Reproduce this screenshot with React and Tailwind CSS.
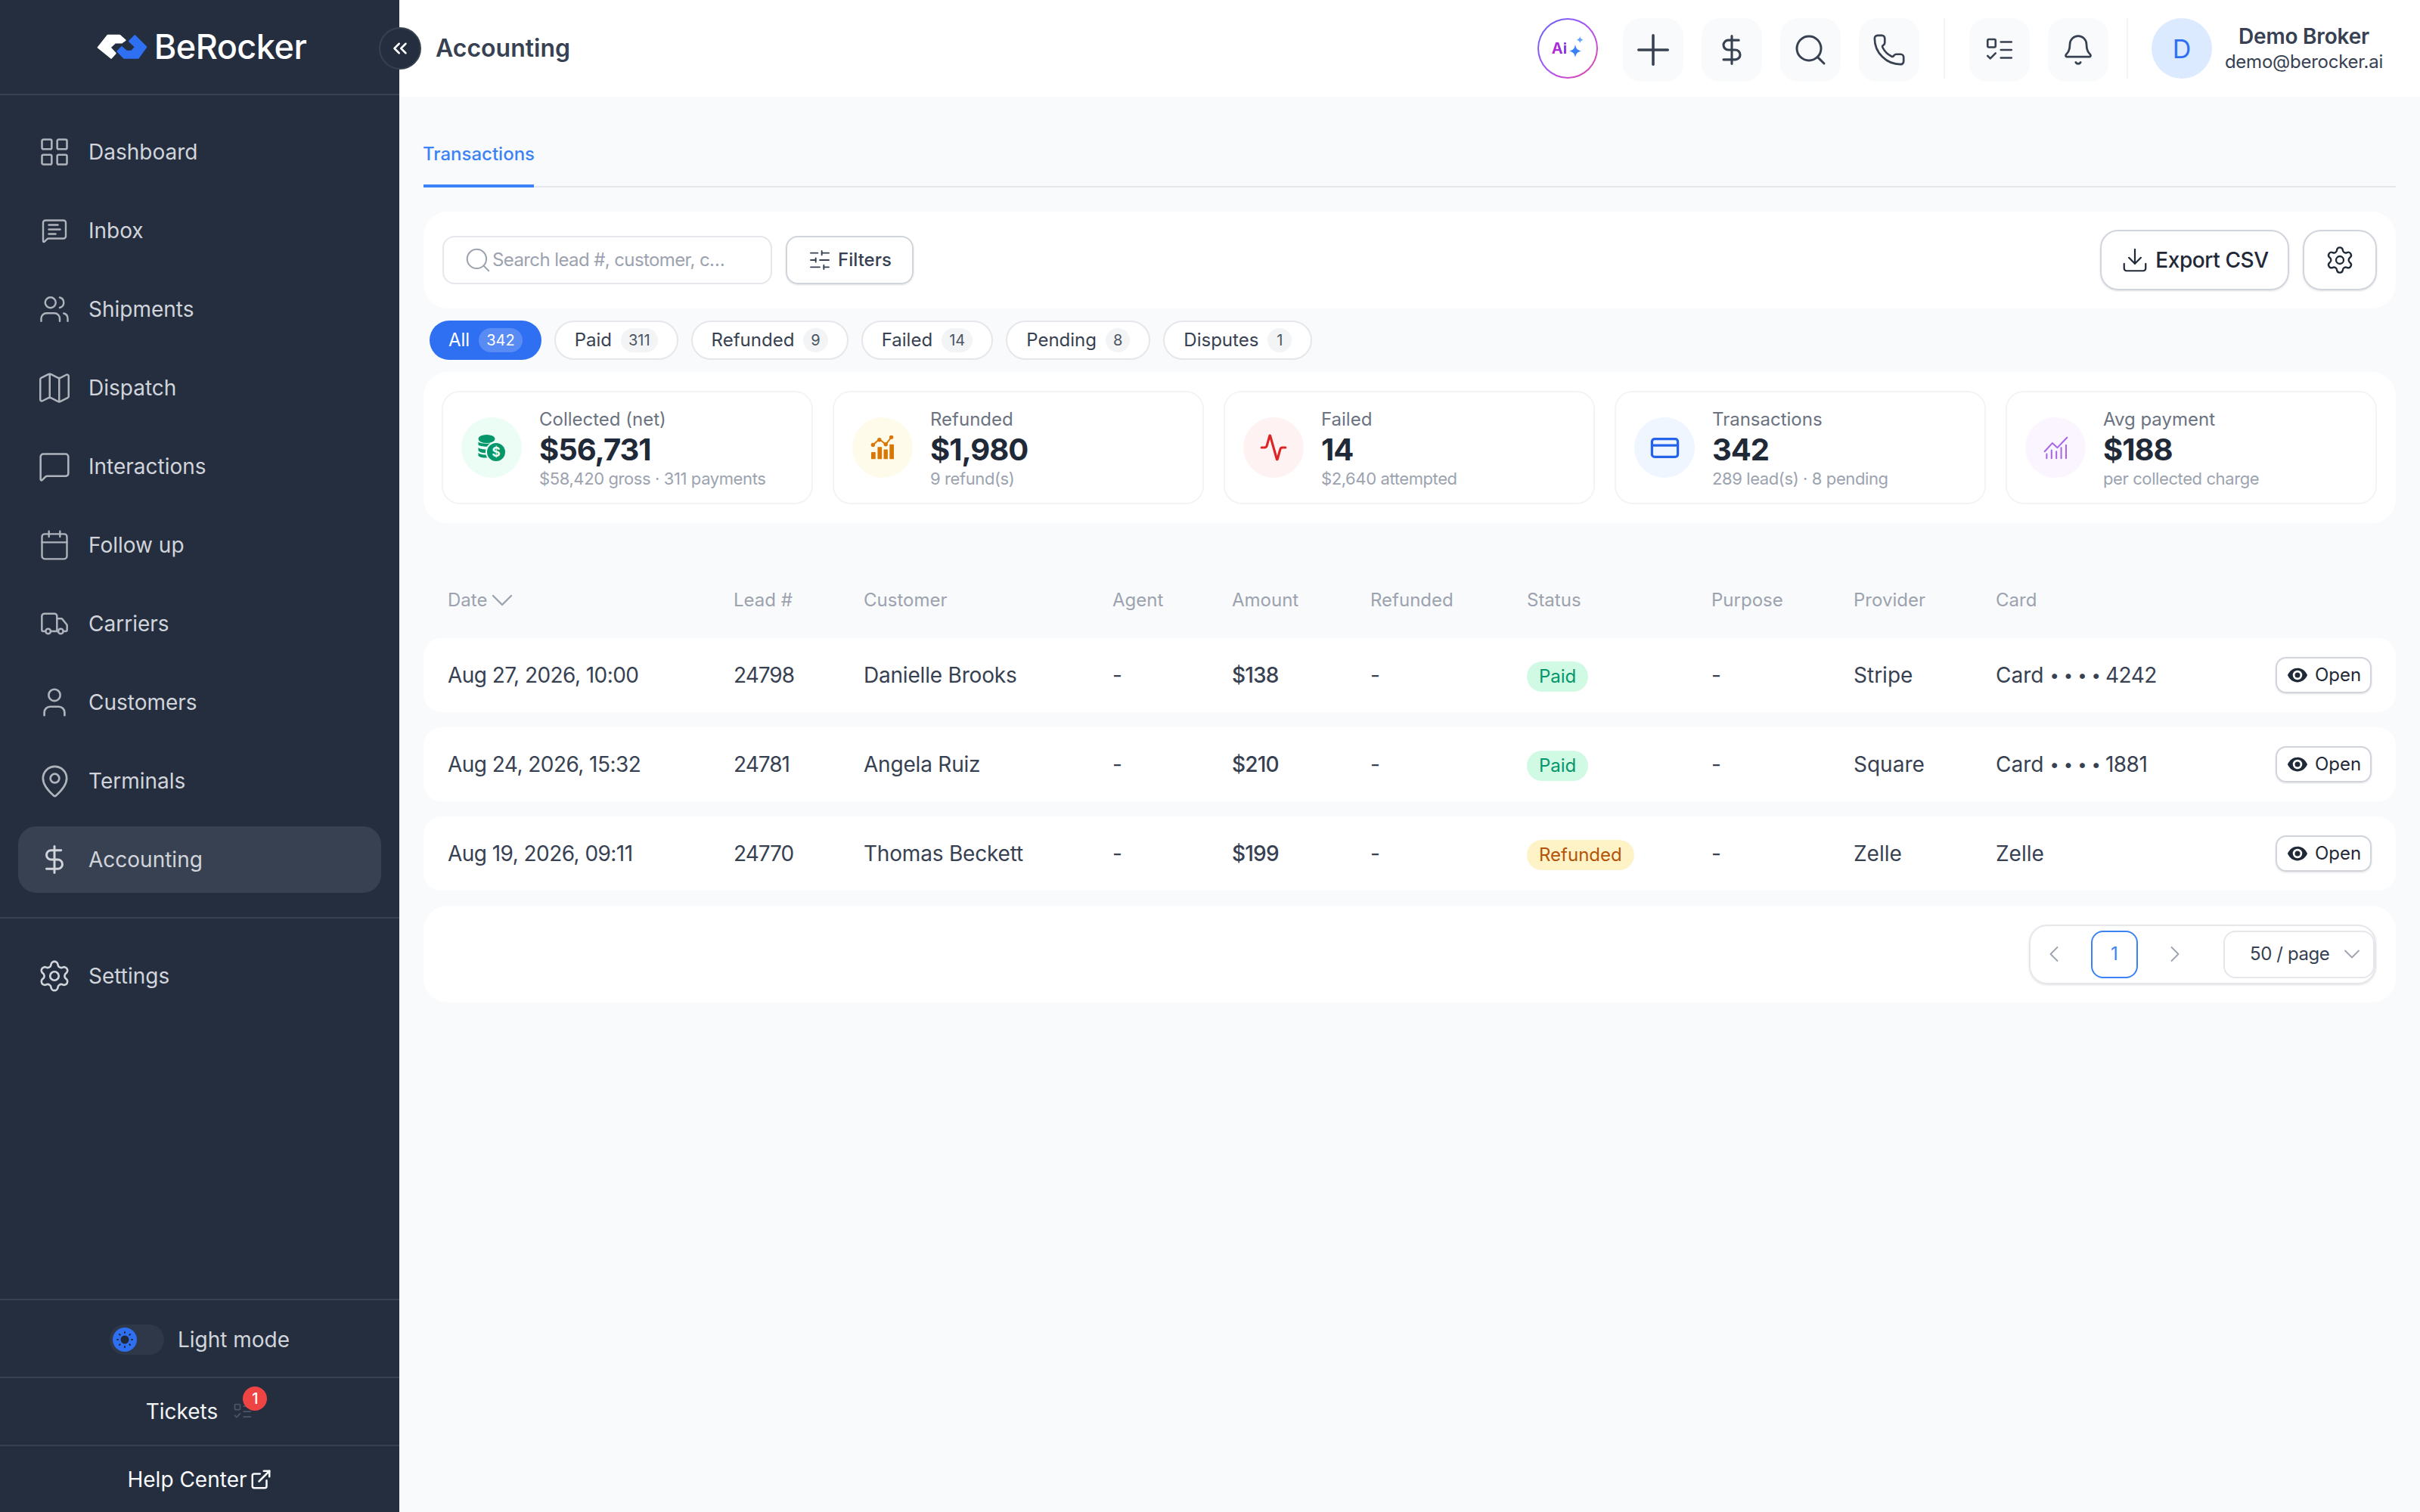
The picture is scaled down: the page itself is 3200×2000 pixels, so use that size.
import {
  Activity,
  Bell,
  Calendar,
  ChevronDown,
  ChevronLeft,
  ChevronRight,
  ChevronsLeft,
  CreditCard,
  DollarSign,
  Download,
  ExternalLink,
  LayoutGrid,
  Map,
  MapPin,
  MessageSquare,
  MessageSquareText,
  Phone,
  Plus,
  Search,
  Settings,
  SlidersHorizontal,
  Truck,
  User,
  Users,
} from 'lucide-react';

const font = { fontFamily: 'Inter, "Noto Sans", sans-serif' };

const navItems = [
  { label: 'Dashboard', icon: LayoutGrid, size: 44, sw: 1.4 },
  { label: 'Inbox', icon: MessageSquareText, size: 36, sw: 1.6 },
  { label: 'Shipments', icon: Users, size: 42, sw: 1.4 },
  { label: 'Dispatch', icon: Map, size: 50, sw: 1.2 },
  { label: 'Interactions', icon: MessageSquare, size: 44, sw: 1.4 },
  { label: 'Follow up', icon: Calendar, size: 44, sw: 1.3 },
  { label: 'Carriers', icon: Truck, size: 40, sw: 1.5 },
  { label: 'Customers', icon: User, size: 46, sw: 1.4 },
  { label: 'Terminals', icon: MapPin, size: 47, sw: 1.4 },
  { label: 'Accounting', icon: DollarSign, size: 42, sw: 1.7, active: true },
];

const pills = [
  { label: 'All', count: 342, active: true },
  { label: 'Paid', count: 311 },
  { label: 'Refunded', count: 9 },
  { label: 'Failed', count: 14 },
  { label: 'Pending', count: 8 },
  { label: 'Disputes', count: 1 },
];

const columns = ['Lead #', 'Customer', 'Agent', 'Amount', 'Refunded', 'Status', 'Purpose', 'Provider', 'Card'];

const rows = [
  { date: 'Aug 27, 2026, 10:00', lead: '24798', customer: 'Danielle Brooks', amount: '$138', status: 'Paid', provider: 'Stripe', card: 'Card', last4: '4242' },
  { date: 'Aug 24, 2026, 15:32', lead: '24781', customer: 'Angela Ruiz', amount: '$210', status: 'Paid', provider: 'Square', card: 'Card', last4: '1881' },
  { date: 'Aug 19, 2026, 09:11', lead: '24770', customer: 'Thomas Beckett', amount: '$199', status: 'Refunded', provider: 'Zelle', card: 'Zelle' },
];

function Logo() {
  return (
    <svg width="69" height="36" viewBox="20 42 207 105">
      <path d="M28 97 L66 49 L114 49 L136 68 L122 78 L96 78 L76 97 L97 120 L80 139 Z" fill="#fff" stroke="#fff" strokeWidth="6" strokeLinejoin="round" />
      <path d="M174 50 L219 95 L187 139 L131 139 L105 112 L122 95 L141 112 L160 112 L176 95 L152 72 Z" fill="#2f6ff2" stroke="#2f6ff2" strokeWidth="6" strokeLinejoin="round" />
    </svg>
  );
}

function ChecklistIcon({ className, size = 40 }) {
  return (
    <svg className={className} width={size} height={size} viewBox="0 0 24 24" fill="none" stroke="currentColor" strokeWidth="1.5" strokeLinecap="round" strokeLinejoin="round">
      <rect x="3" y="4" width="6" height="6" rx="1" />
      <path d="M13 6h8M13 12h8M13 18h8M3 16.5l2 2 4-4" />
    </svg>
  );
}

function SunDot() {
  return (
    <svg width="24" height="24" viewBox="0 0 24 24" fill="#1f2937" stroke="#1f2937" strokeWidth="2" strokeLinecap="round">
      <circle cx="12" cy="12" r="4.5" />
      <path d="M12 2v1M12 21v1M2 12h1M21 12h1M5 5l.7.7M18.3 18.3l.7.7M5 19l.7-.7M18.3 5.700l.7-.7" />
    </svg>
  );
}

function CoinsIcon() {
  return (
    <svg width="36" height="35" viewBox="0 0 36 35" fill="#059669">
      <ellipse cx="11.5" cy="5.5" rx="11" ry="5.5" />
      <path d="M0.5 9.5c3 3 19 3 22 0v4c-3 3-19 3-22 0zM0.5 17c3 3 15 3 16 2v4c-4 2-13 2-16-2zM0.5 24c3 3 12 3 15 2l1 4c-5 1-13 1-16-2z" />
      <circle cx="24" cy="23" r="13" stroke="#ecfdf5" strokeWidth="2" />
      <text x="24" y="29" textAnchor="middle" fontSize="17" fontWeight="700" fill="#ecfdf5" fontFamily="Inter">$</text>
    </svg>
  );
}

function BarsIcon() {
  return (
    <svg width="32" height="32" viewBox="105 110 95 95" fill="#d97706">
      <path d="M115 147L140 125L165 145L187 117" fill="none" stroke="#d97706" strokeWidth="6" strokeLinejoin="round" />
      <circle cx="115" cy="147" r="8" />
      <circle cx="140" cy="127" r="8" />
      <circle cx="165" cy="145" r="8" />
      <circle cx="187" cy="117" r="8" />
      <rect x="108" y="175" width="17" height="28" rx="2" />
      <rect x="133" y="155" width="17" height="48" rx="2" />
      <rect x="157" y="165" width="16" height="38" rx="2" />
      <rect x="180" y="145" width="17" height="58" rx="2" />
    </svg>
  );
}

function ThinChartIcon() {
  return (
    <svg width="33" height="31" viewBox="95 110 98 92" fill="none" stroke="#a866e6" strokeLinecap="round" strokeLinejoin="round">
      <path d="M100 170L130 137L150 155L188 115" strokeWidth="6" />
      <path d="M108 197V180M127 197V165M146 197V170M165 197V155M184 197V145" strokeWidth="6" />
    </svg>
  );
}

function OpenEye() {
  return (
    <svg width="30" height="30" viewBox="0 0 24 24" fill="#1f2937">
      <path d="M1.500 12C4 6.800 7.600 4.500 12 4.500s8 2.300 10.500 7.500c-2.500 5.200-6.100 7.500-10.500 7.500S4 17.200 1.500 12z" />
      <circle cx="12" cy="12" r="5" fill="#fff" />
      <circle cx="12" cy="12" r="2.800" />
    </svg>
  );
}

function Sparkles() {
  return (
    <svg width="22" height="28" viewBox="2 0 14 18" fill="#3b82f6" className="-mt-1">
      <path d="M9 7c.6 3.400 1.800 4.600 5 5.500-3.200.9-4.400 2.100-5 5.500-.6-3.400-1.800-4.600-5-5.500 3.200-.9 4.400-2.100 5-5.500z" />
      <path d="M13 0c.3 1.800 1 2.500 2.800 3-1.800.5-2.500 1.200-2.800 3-.3-1.800-1-2.500-2.800-3 1.800-.5 2.500-1.200 2.800-3z" fill="#60a5fa" />
    </svg>
  );
}

function StatCard({ icon, tint, label, value, sub }) {
  return (
    <div className="flex h-[150px] flex-1 items-center gap-[23px] rounded-[24px] border-2 border-[#f3f4f6] bg-white pl-6">
      <div className={`flex h-20 w-20 shrink-0 items-center justify-center rounded-full ${tint}`}>{icon}</div>
      <div className="flex flex-col pt-[2px]">
        <span className="text-[24px] leading-[32px] text-[#6b7280]">{label}</span>
        <span className="text-[40px] leading-[48px] font-bold tracking-[-1px] text-[#1f2937]">{value}</span>
        <span className="-mt-[1px] text-[22px] leading-[30px] tracking-[-0.4px] text-[#9ca3af]">{sub}</span>
      </div>
    </div>
  );
}

function HeaderButton({ children }) {
  return <button className="mt-1 flex h-[84px] w-20 items-center justify-center rounded-[24px] bg-[#f9fafb] text-[#374151]">{children}</button>;
}

const gridCols = 'grid grid-cols-[378px_172px_329px_158px_183px_207px_244px_188px_188px_1fr] items-center pl-8 pr-8';

export default function App() {
  return (
    <div className="flex h-screen bg-[#f9fafb]" style={font}>
      <aside className="flex w-[528px] shrink-0 flex-col bg-[#242e3f]">
        <div className="flex h-[126px] items-center justify-center gap-[8px] border-b-2 border-[#374151] pl-[4px]">
          <Logo />
          <span className="text-[45px] font-medium tracking-[-0.5px] text-white">BeRocker</span>
        </div>
        <nav className="flex flex-col gap-4 border-b-2 border-[#374151] px-6 pt-[31px] pb-8">
          {navItems.map(({ label, icon: Icon, size, sw, active }) => (
            <a key={label} className={`flex h-[88px] items-center gap-[25px] rounded-[24px] pl-7 text-[28px] text-[#d1d5db] ${active ? 'bg-[#374151]' : ''}`}>
              <span className="flex h-10 w-10 shrink-0 items-center justify-center">
                <Icon size={size} strokeWidth={sw} className={`shrink-0 ${active ? 'text-[#d1d5db]' : 'text-[#aeb3bc]'}`} />
              </span>
              {label}
            </a>
          ))}
        </nav>
        <div className="px-6 pt-8">
          <a className="flex h-[88px] items-center gap-[25px] pl-7 text-[28px] text-[#d1d5db]">
            <span className="flex h-10 w-10 shrink-0 items-center justify-center">
              <Settings size={46} strokeWidth={1.4} className="shrink-0 text-[#d1d5db]" />
            </span>
            Settings
          </a>
        </div>
        <div className="mt-auto flex h-[103px] items-center justify-center gap-[18px] border-t-2 border-[#374151] pt-[3px] text-[28px] text-[#d1d5db]">
          <div className="flex h-10 w-[72px] items-center rounded-full bg-[#2e3848] pl-1">
            <div className="flex h-8 w-8 items-center justify-center rounded-full bg-[#2f6ff2]">
              <SunDot />
            </div>
          </div>
          Light mode
        </div>
        <div className="flex h-[90px] items-center justify-center gap-[19px] border-t-2 border-[#374151] text-[28px] text-[#f3f4f6]">
          Tickets
          <div className="relative">
            <ChecklistIcon size={28} className="text-[#4b5563]" />
            <span className="absolute -top-[19px] left-[14px] flex h-8 w-8 items-center justify-center rounded-full bg-[#ef4444] text-[20px] font-medium text-white">1</span>
          </div>
        </div>
        <div className="flex h-[89px] items-center justify-center gap-[3px] border-t-2 border-[#374151] text-[28px] text-[#f9fafb]">
          Help Center
          <ExternalLink size={30} strokeWidth={2} />
        </div>
      </aside>

      <div className="relative flex min-w-0 flex-1 flex-col">
        <button className="absolute top-9 -left-[27px] flex h-14 w-14 items-center justify-center rounded-full border-2 border-[#374151] bg-[#242e3f] text-white">
          <ChevronsLeft size={30} strokeWidth={2} />
        </button>
        <header className="flex h-[128px] shrink-0 items-center bg-white pr-[49px] pl-12">
          <h1 className="text-[32px] font-semibold text-[#374151]">Accounting</h1>
          <div className="ml-auto flex items-center gap-6">
            <div className="mr-[9px] flex h-20 w-20 items-center justify-center rounded-full bg-[linear-gradient(135deg,#6366f1,#a855f7,#ec4899)] p-[2px]">
              <div className="flex h-full w-full items-center justify-center rounded-full bg-white">
                <span className="bg-[linear-gradient(90deg,#c026d3,#7c3aed)] bg-clip-text text-[20px] font-bold text-transparent">Ai</span>
                <Sparkles />
              </div>
            </div>
            <HeaderButton><Plus size={66} strokeWidth={1.3} className="shrink-0" /></HeaderButton>
            <HeaderButton><DollarSign size={44} strokeWidth={1.7} /></HeaderButton>
            <HeaderButton><Search size={48} strokeWidth={1.5} /></HeaderButton>
            <HeaderButton><Phone size={46} strokeWidth={1.4} /></HeaderButton>
            <div className="mx-2 h-20 w-[2px] bg-[#f3f4f6]" />
            <HeaderButton><ChecklistIcon size={42} /></HeaderButton>
            <HeaderButton><Bell size={44} strokeWidth={1.5} /></HeaderButton>
            <div className="mr-[7px] h-20 w-[2px] bg-[#f3f4f6]" />
            <div className="flex items-center gap-[17px]">
              <div className="flex h-20 w-20 items-center justify-center rounded-full bg-[#dbeafe] text-[34px] text-[#2f6ff2]">D</div>
              <div className="flex flex-col items-center">
                <span className="text-[28px] leading-[36px] font-semibold tracking-[-0.2px] text-[#374151]">Demo Broker</span>
                <span className="text-[24px] leading-[32px] tracking-[-0.25px] text-[#374151]">demo@berocker.ai</span>
              </div>
            </div>
          </div>
        </header>

        <main className="flex flex-col pr-8 pl-8">
          <div className="mt-4 flex h-[104px] border-b-2 border-[#e5e7eb]">
            <div className="flex h-[104px] w-[146px] items-center justify-center border-b-4 border-[#3b82f6] pt-5 text-[24px] font-medium text-[#3b82f6]">Transactions</div>
          </div>

          <section className="mt-8 flex h-32 items-center gap-[18px] rounded-[32px] bg-white pr-[25px] pl-[25px]">
            <label className="flex h-16 w-[436px] items-center rounded-[16px] border-2 border-[#e5e7eb] pl-[26px]">
              <Search size={38} strokeWidth={1.3} className="shrink-0 text-[#9ca3af]" />
              <input placeholder="Search lead #, customer, c…" className="min-w-0 flex-1 text-[24px] tracking-[-0.6px] outline-none placeholder:text-[#9ca3af]" />
            </label>
            <button className="flex h-16 w-[169px] items-center justify-center gap-2 rounded-[16px] border-2 border-[#d1d5db] text-[24px] font-medium text-[#374151] shadow-sm">
              <SlidersHorizontal size={32} strokeWidth={1.4} />
              Filters
            </button>
            <button className="ml-auto flex h-20 w-[250px] items-center justify-center gap-2 rounded-[24px] border-2 border-[#d1d5db] text-[28px] font-medium tracking-[-0.4px] text-[#1f2937] shadow-sm">
              <Download size={38} strokeWidth={1.4} />
              Export CSV
            </button>
            <button className="flex h-20 w-[98px] items-center justify-center rounded-[24px] border-2 border-[#d1d5db] text-[#1f2937] shadow-sm">
              <Settings size={40} strokeWidth={1.4} />
            </button>
          </section>

          <div className="mt-4 flex h-[52px] gap-[17px] pl-2">
            {pills.map((p) => (
              <button
                key={p.label}
                className={`flex items-center gap-3 rounded-full px-[25px] text-[24px] ${p.active ? 'bg-[#2f6ff2] text-white' : 'border-2 border-[#e5e7eb] bg-white text-[#374151]'}`}
              >
                {p.label}
                <span className={`flex h-8 min-w-8 items-center justify-center rounded-full px-[10px] text-[20px] ${p.active ? 'bg-white/20 text-white' : 'bg-[#f3f4f6] text-[#4b5563]'}`}>{p.count}</span>
              </button>
            ))}
          </div>

          <section className="mt-4 flex h-[200px] items-center gap-[26px] rounded-[32px] bg-white pr-[25px] pl-[24px]">
            <StatCard icon={<CoinsIcon />} tint="bg-[#ecfdf5]" label="Collected (net)" value="$56,731" sub="$58,420 gross · 311 payments" />
            <StatCard icon={<BarsIcon />} tint="bg-[#fffbeb]" label="Refunded" value="$1,980" sub="9 refund(s)" />
            <StatCard icon={<Activity size={38} strokeWidth={2} className="text-[#dc2626]" />} tint="bg-[#fef2f2]" label="Failed" value="14" sub="$2,640 attempted" />
            <StatCard icon={<CreditCard size={41} strokeWidth={1.9} className="text-[#2563eb]" />} tint="bg-[#eff6ff]" label="Transactions" value="342" sub="289 lead(s) · 8 pending" />
            <StatCard icon={<ThinChartIcon />} tint="bg-[#faf5ff]" label="Avg payment" value="$188" sub="per collected charge" />
          </section>

          <div className={`${gridCols} mt-[78px] h-8 text-[24px] text-[#9ca3af]`}>
            <span className="flex items-center">Date<ChevronDown size={48} strokeWidth={1.2} className="-ml-1 shrink-0" /></span>
            {columns.map((c) => <span key={c}>{c}</span>)}
          </div>

          <div className="mt-[42px] flex flex-col gap-5">
            {rows.map((r) => (
              <div key={r.lead} className={`${gridCols} h-[98px] rounded-[24px] bg-white text-[28px] text-[#374151]`}>
                <span className="tracking-[-0.55px]">{r.date}</span>
                <span className="tracking-[-1px]">{r.lead}</span>
                <span className="tracking-[-0.2px]">{r.customer}</span>
                <span>-</span>
                <span className="font-medium tracking-[-0.8px]">{r.amount}</span>
                <span>-</span>
                <span>
                  <span className={`inline-flex h-10 items-center rounded-full px-4 text-[24px] ${r.status === 'Paid' ? 'bg-[#d1fae5] text-[#059669]' : 'bg-[#fef3c7] text-[#b45309]'}`}>{r.status}</span>
                </span>
                <span>-</span>
                <span>{r.provider}</span>
                <span className="flex items-center justify-between">
                  <span className="flex items-center">
                    {r.card}
                    {r.last4 && <span className="ml-2 text-[22px] tracking-[6px]">••••</span>}
                    <span className="tracking-[-0.5px]">{r.last4}</span>
                  </span>
                  <button className="flex h-12 w-[127px] shrink-0 items-center justify-center gap-2 rounded-[14px] border-2 border-[#d1d5db] text-[24px] text-[#1f2937] shadow-sm">
                    <OpenEye />
                    Open
                  </button>
                </span>
              </div>
            ))}
          </div>

          <div className="mt-5 flex h-32 items-center justify-end rounded-[32px] bg-white pr-[26px]">
            <div className="flex h-[79px] w-[459px] items-center rounded-[24px] border-2 border-[#e5e7eb] pl-[13px] shadow-sm">
              <ChevronLeft size={36} strokeWidth={1.2} className="shrink-0 text-[#9ca3af]" />
              <div className="ml-[31px] flex h-[63px] w-[62px] items-center justify-center rounded-[16px] border-2 border-[#3b82f6] text-[24px] text-[#3b82f6]">1</div>
              <ChevronRight size={36} strokeWidth={1.2} className="ml-[31px] shrink-0 text-[#9ca3af]" />
              <div className="ml-[46px] flex h-[63px] w-[200px] items-center justify-between rounded-[16px] border-2 border-[#e5e7eb] pr-[10px] pl-[33px] text-[24px] tracking-[-0.4px] text-[#374151]">
                50 / page
                <ChevronDown size={36} strokeWidth={1.2} className="shrink-0 text-[#9ca3af]" />
              </div>
            </div>
          </div>
        </main>
      </div>
    </div>
  );
}
